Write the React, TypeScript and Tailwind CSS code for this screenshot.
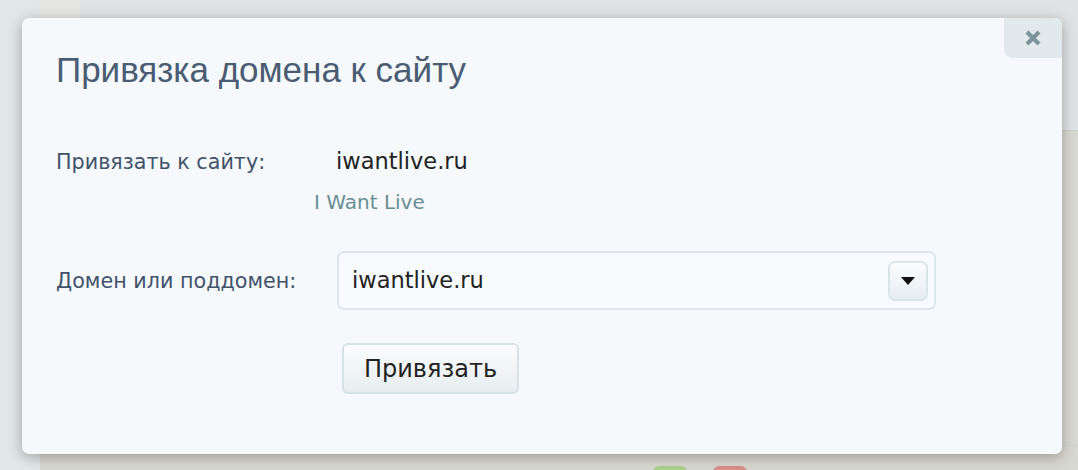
import React from 'react';

const labelFont = { fontFamily: '"DejaVu Sans", Verdana, sans-serif' };

const App: React.FC = () => {
  return (
    <div className="relative w-[1078px] h-[470px] overflow-hidden bg-[#dfe3e5]">
      {/* page behind the overlay */}
      <div className="flex h-full">
        <div className="w-[40px] h-full bg-[#e2e7e9]" />
        <div className="flex-1 flex flex-col">
          <div className="h-[130px] flex">
            <div className="w-[40px] bg-[#e6e7e5]" />
            <div className="flex-1 bg-[#dfe3e5]" />
          </div>
          <div className="flex-1 bg-[#d8d8d2] border-t border-[#cfd3d2] flex flex-col">
            <div className="flex-1 border-b border-[#cfd3d2] mb-[20px]" />
            <div className="h-[4px] flex gap-[26px] pl-[613px]">
              <div className="w-[34px] h-[10px] rounded-t-[6px] bg-[#a9cf8a]" />
              <div className="w-[34px] h-[10px] rounded-t-[6px] bg-[#d98f8c]" />
            </div>
          </div>
        </div>
      </div>

      {/* modal */}
      <div className="absolute left-[22px] top-[18px] w-[1040px] h-[436px] rounded-[7px] bg-[#f5f9fc] shadow-[0_3px_14px_rgba(60,60,45,0.4)]">
        <button className="absolute right-0 top-0 w-[58px] h-[40px] rounded-tr-[7px] rounded-bl-[9px] bg-[#e1e9ec] flex items-center justify-center">
          <svg width="18" height="18" viewBox="0 0 18 18">
            <path d="M3 3 L15 15 M15 3 L3 15" stroke="#7b959b" strokeWidth="4.2" strokeLinecap="butt" />
          </svg>
        </button>

        <div className="pl-[34px] pt-[32px]">
          <h2
            className="text-[35px] leading-[40px] text-[#4b5c72] font-normal"
            style={{ fontFamily: '"Liberation Sans", Arial, sans-serif' }}
          >
            Привязка домена к сайту
          </h2>

          <div className="mt-[58px] flex items-baseline" style={labelFont}>
            <div className="w-[280px] text-[20.7px] leading-[26px] text-[#41526a]">Привязать к сайту:</div>
            <div className="text-[22.5px] leading-[26px] text-[#222]">iwantlive.ru</div>
          </div>
          <div
            className="mt-[16px] ml-[258px] text-[20px] leading-[22px] text-[#6a8d93]"
            style={labelFont}
          >
            I Want Live
          </div>

          <div className="mt-[38px] flex items-center" style={labelFont}>
            <div className="w-[281px] text-[20.7px] leading-[26px] text-[#41526a]">Домен или поддомен:</div>
            <div className="w-[599px] h-[59px] rounded-[7px] border-2 border-[#dde6e9] bg-[#f8fbfd] flex items-center pl-[13px] pr-[6px]">
              <span className="flex-1 text-[22.5px] text-[#222]">iwantlive.ru</span>
              <span className="w-[40px] h-[40px] rounded-[7px] border-2 border-[#dbe4e7] bg-gradient-to-b from-[#fbfdfe] to-[#e6edf0] flex items-center justify-center">
                <svg width="14" height="8" viewBox="0 0 14 8">
                  <path d="M0 0 H14 L7 8 Z" fill="#111" />
                </svg>
              </span>
            </div>
          </div>

          <div className="mt-[33px] pl-[286px]">
            <button
              className="w-[177px] h-[51px] rounded-[6px] border-2 border-[#d8e1e4] bg-gradient-to-b from-[#fbfcfd] to-[#e7edef] text-[24px] text-[#222]"
              style={labelFont}
            >
              Привязать
            </button>
          </div>
        </div>
      </div>
    </div>
  );
};

export default App;
